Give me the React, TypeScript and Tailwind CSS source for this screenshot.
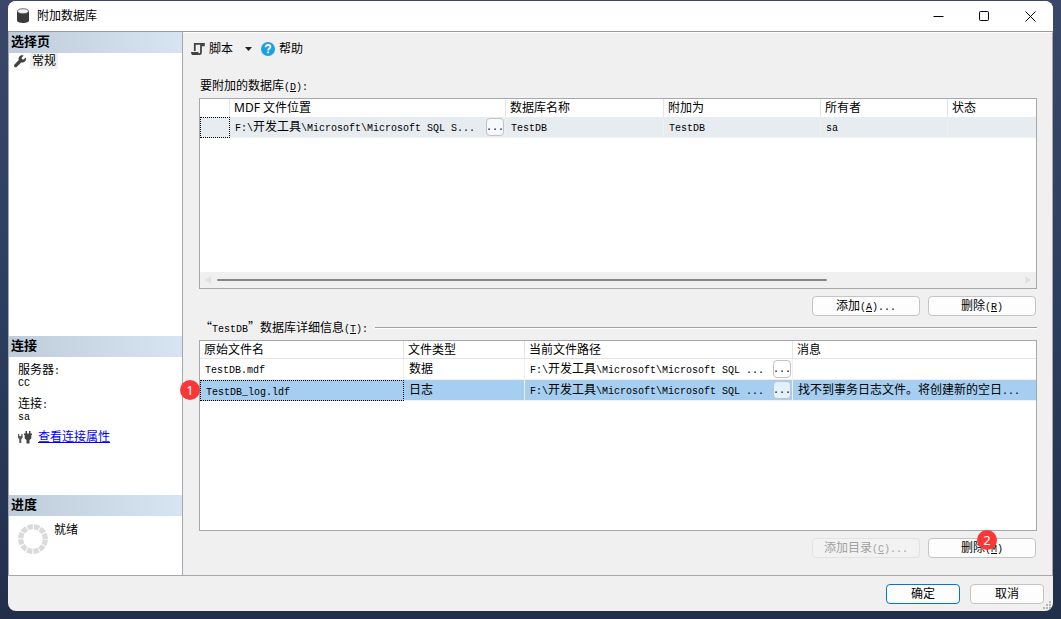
import React from "react";

function Mono({ children }: { children: React.ReactNode }) {
  return <span className="font-['Liberation_Mono',monospace] text-[10px] leading-none">{children}</span>;
}

function DatabaseIcon() {
  return (
    <svg width="14" height="16" viewBox="0 0 14 16" aria-hidden="true">
      <path d="M1 3v9.500C1 14 3.500 15 7 15s6-1 6-2.500V3z" fill="#3a3a3a" />
      <ellipse cx="7" cy="3.200" rx="5.600" ry="2.500" fill="#f0f0f0" stroke="#555" strokeWidth=".8" />
    </svg>
  );
}

function WrenchIcon() {
  return (
    <svg width="13" height="13" viewBox="0 0 13 13" aria-hidden="true">
      <path
        d="M11.700 2.400 9.600 4.600 7.900 4.300 7.600 2.700 9.700.6C8 0 6.200.4 5.300 1.700 4.500 2.800 4.400 4 4.800 5.100L.5 9.600c-.7.7-.6 1.700 0 2.300.7.600 1.700.600 2.400-.1l4.300-4.400c1.300.4 2.700.2 3.700-.8 1.200-1.100 1.400-2.800.8-4.200z"
        fill="#424242"
      />
    </svg>
  );
}

function ScriptIcon() {
  return (
    <svg width="14" height="14" viewBox="0 0 14 14" fill="none" stroke="#424242" aria-hidden="true">
      <path d="M3.800 9V1.900H13" strokeWidth="1.800" />
      <path d="M10 2v8.500c0 1-.5 1.600-1.500 1.600H1" strokeWidth="1.800" />
      <path d="M0 10h7.500v3H2C.7 13 0 12 0 10z" fill="#424242" stroke="none" />
      <path d="M11 1h2.800v3.200H11z" fill="#424242" stroke="none" />
    </svg>
  );
}

function HelpIcon() {
  return (
    <svg width="14" height="14" viewBox="0 0 14 14" aria-hidden="true">
      <circle cx="7" cy="7" r="7" fill="#1ba1e2" />
      <path d="M4.700 5.200C4.700 3.700 5.700 3 7.100 3s2.300.8 2.300 1.900c0 1.600-2.200 1.700-2.200 3.500" fill="none" stroke="#fff" strokeWidth="1.800" />
      <path d="M6.200 9.400H8v1.800H6.200z" fill="#fff" />
    </svg>
  );
}

function PlugsIcon() {
  return (
    <svg width="14" height="14" viewBox="0 0 14 14" aria-hidden="true">
      <path d="M0 4h1.300v2h2V4h1.300v3.500L3.300 9.500V13h-2V9.500L0 7.500z" fill="#5a5a5a" />
      <path d="M7.500 1H9v2.500h2V1h1.500v2.500H14V5h-.7v3.500L11.500 10v3.500h-3V10L6.700 8.500V5H6V3.500h1.500z" fill="#424242" />
    </svg>
  );
}

function Spinner() {
  return (
    <svg width="30" height="30" viewBox="0 0 30 30" aria-hidden="true">
      <circle cx="15" cy="15" r="12.300" fill="none" stroke="#dadada" strokeWidth="5.200" strokeDasharray="5.340 1.100" strokeDashoffset="-0.550" />
    </svg>
  );
}

function SideHeader({ children }: { children: React.ReactNode }) {
  return (
    <h2 className="h-[21px] bg-linear-to-r from-[#bfcddb] to-[#d7e4f2] px-0.5 text-[13px] leading-[18px] font-bold">
      {children}
    </h2>
  );
}

function PushButton({
  children,
  disabled = false,
  primary = false,
  wide = false,
}: {
  children: React.ReactNode;
  disabled?: boolean;
  primary?: boolean;
  wide?: boolean;
}) {
  const tone = disabled
    ? "border-[#e2e2e2] bg-[#f2f2f2] text-[#a0a0a0]"
    : primary
      ? "border-[#0078d4] bg-[#fdfdfd]"
      : "border-[#c4c4c4] bg-[#fdfdfd]";
  return (
    <button
      type="button"
      disabled={disabled}
      className={`flex h-5 items-center justify-center rounded border whitespace-nowrap ${wide ? "w-[108px]" : "w-[74px]"} ${tone}`}
    >
      <span className="h-4 leading-4">{children}</span>
    </button>
  );
}

function BrowseCell({ children, tail }: { children: React.ReactNode; tail: string }) {
  return (
    <div className="flex items-center justify-between pr-px">
      <span className="h-4 whitespace-nowrap">
        <Mono>F:\</Mono>
        {children}
        <Mono>\Microsoft\Microsoft SQL {tail}</Mono>
      </span>
      <button
        type="button"
        aria-label="浏览"
        className="flex h-[18px] w-[18px] shrink-0 items-end justify-center rounded border border-[#c0c4c8] bg-white/70 pb-0.5"
      >
        <Mono>...</Mono>
      </button>
    </div>
  );
}

function Badge({ children }: { children: React.ReactNode }) {
  return (
    <span className="flex h-5 w-5 items-center justify-center rounded-full bg-[#fb3636] font-['Noto_Sans',sans-serif] text-[13px] leading-5 text-white">
      {children}
    </span>
  );
}

const headCell = "h-[18px] border-r border-[#e5e5e5] px-1 py-0 text-left font-normal leading-4 last:border-r-0";
const bodyCell = "h-[21px] border-r border-b border-[#f0f0f0] py-0 pl-[5px] leading-4 last:border-r-0";

function AttachTable() {
  return (
    <table className="w-full table-fixed border-separate border-spacing-0">
      <colgroup>
        <col className="w-[30px]" />
        <col className="w-[276px]" />
        <col className="w-[158px]" />
        <col className="w-[157px]" />
        <col className="w-[127px]" />
        <col />
      </colgroup>
      <thead>
        <tr>
          <th className={headCell} />
          <th className={headCell}>MDF 文件位置</th>
          <th className={headCell}>数据库名称</th>
          <th className={headCell}>附加为</th>
          <th className={headCell}>所有者</th>
          <th className={headCell}>状态</th>
        </tr>
      </thead>
      <tbody>
        <tr className="bg-[#e7ecf0]">
          <td className="h-[21px] border border-dotted border-black p-0" />
          <td className={bodyCell}><BrowseCell tail="S...">开发工具</BrowseCell></td>
          <td className={bodyCell}><Mono>TestDB</Mono></td>
          <td className={bodyCell}><Mono>TestDB</Mono></td>
          <td className={bodyCell}><Mono>sa</Mono></td>
          <td className={bodyCell} />
        </tr>
      </tbody>
    </table>
  );
}

function DetailsTable() {
  return (
    <table className="w-full table-fixed border-separate border-spacing-0">
      <colgroup>
        <col className="w-[204px]" />
        <col className="w-[121px]" />
        <col className="w-[268px]" />
        <col />
      </colgroup>
      <thead>
        <tr>
          <th className={`${headCell} border-b`}>原始文件名</th>
          <th className={`${headCell} border-b`}>文件类型</th>
          <th className={`${headCell} border-b`}>当前文件路径</th>
          <th className={`${headCell} border-b`}>消息</th>
        </tr>
      </thead>
      <tbody>
        <tr>
          <td className={bodyCell}><Mono>TestDB.mdf</Mono></td>
          <td className={bodyCell}>数据</td>
          <td className={bodyCell}><BrowseCell tail="...">开发工具</BrowseCell></td>
          <td className={bodyCell} />
        </tr>
        <tr className="bg-[#a5cef0]">
          <td className="h-[21px] border border-dotted border-black py-0 pl-[5px] leading-4"><Mono>TestDB_log.ldf</Mono></td>
          <td className={bodyCell}>日志</td>
          <td className={bodyCell}><BrowseCell tail="...">开发工具</BrowseCell></td>
          <td className={`${bodyCell} whitespace-nowrap`}>找不到事务日志文件。将创建新的空日<Mono>...</Mono></td>
        </tr>
      </tbody>
    </table>
  );
}

function Sidebar() {
  return (
    <aside className="flex w-[175px] shrink-0 flex-col border-x border-[#a5a7ad] bg-white">
      <section className="flex-1">
        <SideHeader>选择页</SideHeader>
        <a href="#general" className="flex items-center gap-[3px] px-[5px] leading-4">
          <WrenchIcon />
          <span className="bg-[#f0f0f0] px-0.5">常规</span>
        </a>
      </section>
      <section className="h-[159px]">
        <SideHeader>连接</SideHeader>
        <dl className="px-[9px] pt-[7px]">
          <dt className="h-3 leading-3">服务器<Mono>:</Mono></dt>
          <dd className="h-3 leading-3"><Mono>CC</Mono></dd>
          <dt className="mt-2.5 h-3 leading-3">连接<Mono>:</Mono></dt>
          <dd className="h-3 leading-3"><Mono>sa</Mono></dd>
        </dl>
        <div className="mt-[7px] flex h-4 items-center gap-1.5 px-[9px] leading-4">
          <PlugsIcon />
          <a href="#connection" className="text-[#0000ff] underline">查看连接属性</a>
        </div>
      </section>
      <section className="h-20">
        <SideHeader>进度</SideHeader>
        <div className="flex gap-1.5 px-[9px] pt-1.5">
          <div className="pt-0.5"><Spinner /></div>
          <span className="leading-4">就绪</span>
        </div>
      </section>
    </aside>
  );
}

export default function App() {
  return (
    <div className="flex min-h-screen flex-col bg-linear-to-b from-[#3a4768] via-[#2c3e5f] to-[#222f4b] px-2 pt-px pb-2 font-['Noto_Sans','Noto_Sans_CJK_SC',sans-serif] text-xs text-black">
      <div className="flex flex-1 flex-col overflow-hidden rounded-lg bg-[#f0f0f0]">
        <header className="flex h-[31px] items-center justify-between border-b border-[#9b9b9b] bg-white">
          <div className="flex items-center gap-[7px] pl-2">
            <DatabaseIcon />
            <h1>附加数据库</h1>
          </div>
          <div className="flex">
            <button type="button" aria-label="最小化" className="flex h-7 w-[46px] items-center justify-center">
              <svg width="11" height="11" viewBox="0 0 11 11"><path d="M.5 5.500h10" stroke="#000" /></svg>
            </button>
            <button type="button" aria-label="最大化" className="flex h-7 w-[46px] items-center justify-center">
              <svg width="11" height="11" viewBox="0 0 11 11"><rect x=".5" y=".5" width="9" height="9" rx="1" fill="none" stroke="#000" /></svg>
            </button>
            <button type="button" aria-label="关闭" className="flex h-7 w-[46px] items-center justify-center">
              <svg width="11" height="11" viewBox="0 0 11 11"><path d="m.5.5 10 10m0-10-10 10" stroke="#000" /></svg>
            </button>
          </div>
        </header>

        <div className="flex flex-1">
          <Sidebar />
          <main className="flex min-w-0 flex-1 flex-col border-t border-r border-t-white border-r-[#a5a7ad] pr-[15px] pb-[17px] pl-4">
            <div className="-ml-2 flex h-[31px] items-center">
              <button type="button" className="flex items-center gap-1">
                <ScriptIcon />
                脚本
                <svg className="ml-2" width="7" height="4" viewBox="0 0 7 4"><path d="M0 0h7L3.500 4z" fill="#222" /></svg>
              </button>
              <button type="button" className="ml-[9px] flex items-center gap-1">
                <HelpIcon />
                帮助
              </button>
            </div>

            <p className="mt-3.5 mb-1 h-4 px-px leading-4">要附加的数据库<Mono>(<u>D</u>):</Mono></p>
            <div className="flex min-h-[120px] flex-1 flex-col border border-[#a5a7ad] bg-white">
              <div className="flex-1"><AttachTable /></div>
              <div className="flex h-4 items-center gap-1.5 bg-[#f0f0f0] px-1">
                <svg width="7" height="8" viewBox="0 0 7 8"><path d="M7 0v8L1 4z" fill="#e0e0e0" /></svg>
                <div className="flex-1"><div className="h-0.5 w-[76%] rounded-full bg-[#858585]" /></div>
                <svg width="7" height="8" viewBox="0 0 7 8"><path d="M0 0v8l6-4z" fill="#e0e0e0" /></svg>
              </div>
            </div>
            <div className="mt-[7px] flex justify-end gap-2 pr-px">
              <PushButton wide>添加<Mono>(<u>A</u>)...</Mono></PushButton>
              <PushButton wide>删除<Mono>(<u>R</u>)</Mono></PushButton>
            </div>

            <div className="my-1 flex h-4 items-center gap-[7px] pl-px leading-4">
              <p className="h-4">
                <span className="font-['Noto_Sans_CJK_SC',sans-serif] leading-none">“</span>
                <Mono>TestDB</Mono>
                <span className="font-['Noto_Sans_CJK_SC',sans-serif] leading-none">”</span>
                数据库详细信息<Mono>(<u>T</u>):</Mono>
              </p>
              <div className="h-0.5 flex-1 border-t border-b border-t-[#a0a0a0] border-b-white" />
            </div>
            <div className="relative min-h-[120px] flex-1 border border-[#a5a7ad] bg-white">
              <DetailsTable />
              <div className="absolute top-[39px] -left-5"><Badge>1</Badge></div>
            </div>
            <div className="mt-[7px] flex justify-end gap-2 pr-px">
              <PushButton wide disabled>添加目录<Mono>(<u>C</u>)...</Mono></PushButton>
              <div className="relative">
                <PushButton wide>删除<Mono>(<u>M</u>)</Mono></PushButton>
                <div className="absolute -top-2 left-[49px]"><Badge>2</Badge></div>
              </div>
            </div>
          </main>
        </div>

        <footer className="relative flex h-9 items-center justify-end gap-2.5 border-t border-[#a5a7ad] px-[9px]">
          <PushButton primary>确定</PushButton>
          <PushButton>取消</PushButton>
          <svg className="absolute right-0.5 bottom-0.5" width="8" height="8" viewBox="0 0 8 8" fill="#b4b4b4">
            <path d="M6 0h2v2H6zM3 3h2v2H3zM6 3h2v2H6zM0 6h2v2H0zM3 6h2v2H3zM6 6h2v2H6z" />
          </svg>
        </footer>
      </div>
    </div>
  );
}
